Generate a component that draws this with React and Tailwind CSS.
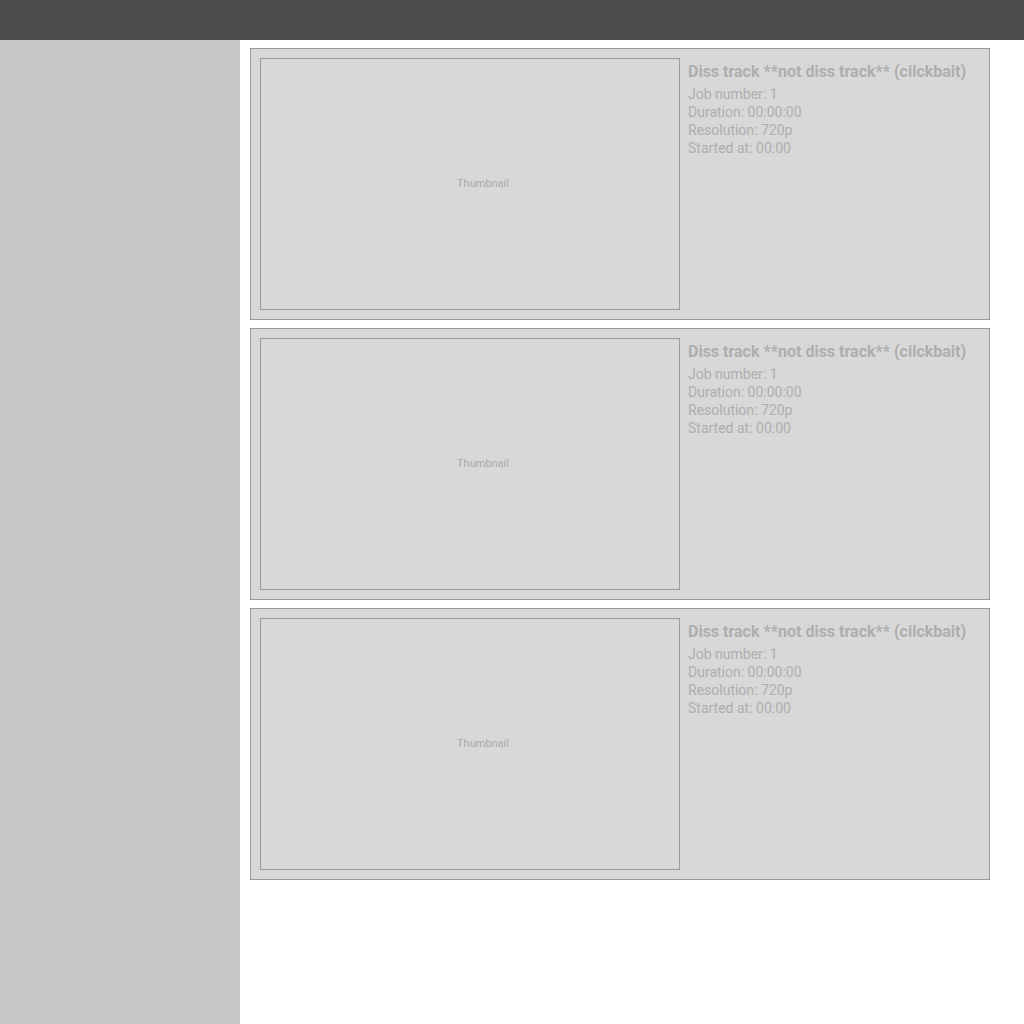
import React from 'react';

const jobs = [1, 2, 3].map((i) => ({
  id: i,
  title: 'Diss track **not diss track** (cilckbait)',
  job: 1,
  duration: '00:00:00',
  resolution: '720p',
  started: '00:00',
}));

function JobCard({ job }) {
  return (
    <div className="w-[740px] h-[272px] border border-[#9a9a9a] bg-[#d8d8d8] p-[9px] flex gap-2">
      <div className="w-[420px] h-[252px] shrink-0 border border-[#9a9a9a] flex items-center justify-center pl-[26px]">
        <span className="text-[11px] text-[#a8a8a8]">Thumbnail</span>
      </div>
      <div className="flex flex-col pt-px text-[#aeaeae]">
        <h3 className="text-[16px] font-bold leading-[26px]">{job.title}</h3>
        <p className="text-[14px] leading-[18px]">Job number: {job.job}</p>
        <p className="text-[14px] leading-[18px]">Duration: {job.duration}</p>
        <p className="text-[14px] leading-[18px]">Resolution: {job.resolution}</p>
        <p className="text-[14px] leading-[18px]">Started at: {job.started}</p>
      </div>
    </div>
  );
}

export default function App() {
  return (
    <div className="h-screen flex flex-col bg-white font-['Roboto',sans-serif]">
      <header className="h-10 shrink-0 bg-[#4b4b4b]" />
      <div className="flex-1 flex min-h-0">
        <aside className="w-[240px] shrink-0 bg-[#c8c8c8]" />
        <main className="flex-1 pt-2 pl-[10px] flex flex-col gap-2">
          {jobs.map((j) => (
            <JobCard key={j.id} job={j} />
          ))}
        </main>
      </div>
    </div>
  );
}
